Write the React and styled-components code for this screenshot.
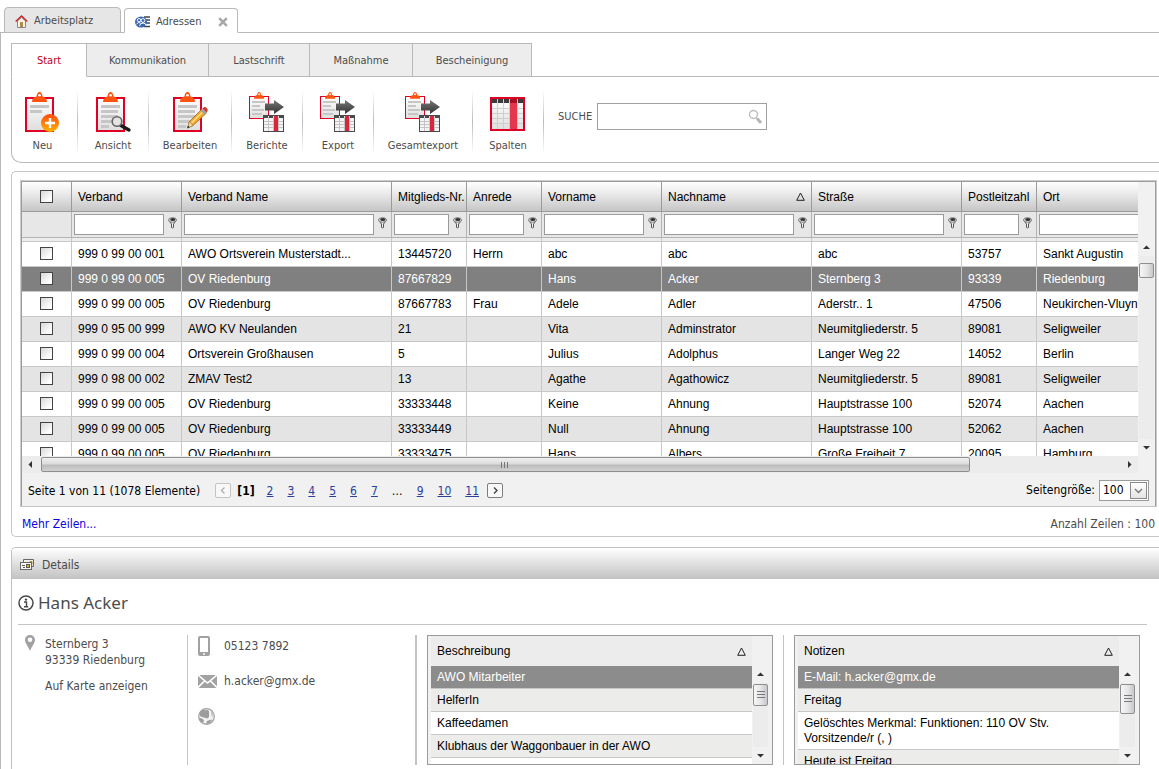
import React from "react";
import styled, { createGlobalStyle, css } from "styled-components";

const UI = `"DejaVu Sans Condensed", "Noto Sans", sans-serif`;
const GRID = `"Liberation Sans", Arial, sans-serif`;
const LINE = "#b9b9b9";

const Global = createGlobalStyle`
  *, *::before, *::after { box-sizing: border-box; }
  body { margin: 0; background: #fff; color: #4c4c4c; font: 12px/16px ${UI}; }
  button, input, select { font: inherit; color: inherit; margin: 0; }
  a { text-decoration: none; color: inherit; }
  svg { display: block; flex: none; }
`;

/* ---------- window tabs ---------- */

const Page = styled.div`
  min-height: 100vh;
  display: flex;
  flex-direction: column;
`;

const WindowTabs = styled.nav`
  display: flex;
  align-items: flex-end;
  height: 33px;
  padding-left: 4px;
  gap: 3px;
  box-shadow: inset 0 -1px ${LINE};
`;

const WindowTab = styled.div`
  display: flex;
  align-items: center;
  height: ${(p) => (p.$active ? 25 : 26)}px;
  width: ${(p) => (p.$active ? 114 : 117)}px;
  padding: 2px 0 0 10px;
  border: 1px solid ${LINE};
  border-radius: 4px 4px 0 0;
  border-bottom-color: ${(p) => (p.$active ? "#fff" : LINE)};
  background: ${(p) => (p.$active ? "#fff" : "#e6e6e6")};
`;

const TabButton = styled.button`
  display: flex;
  align-items: center;
  gap: 6px;
  flex: 1;
  padding: 0;
  border: 0;
  background: none;
  font-size: 11px;
  white-space: nowrap;
`;

const CloseButton = styled.button`
  display: flex;
  padding: 1px 9px 0 0;
  border: 0;
  background: none;
`;

const Workspace = styled.main`
  flex: 1;
  display: flex;
  flex-direction: column;
  border-left: 1px solid ${LINE};
  padding: 10px 0 0 10px;
`;

/* ---------- ribbon ---------- */

const Ribbon = styled.section`
  display: flex;
  flex-direction: column;
`;

const RibbonTabs = styled.div`
  display: flex;
  height: 34px;
  box-shadow: inset 0 -1px ${LINE};
`;

const RibbonTab = styled.button`
  width: ${(p) => p.$w}px;
  padding: 2px 0 0;
  border: 1px solid ${LINE};
  border-left-width: ${(p) => (p.$active ? 1 : 0)}px;
  background: #ededed;
  font-size: 11px;
  white-space: nowrap;
  ${(p) =>
    p.$active &&
    css`
      background: #fff;
      color: #c4001a;
      border-bottom-color: #fff;
    `}
`;

const RibbonBody = styled.div`
  display: flex;
  height: 86px;
  padding-top: 14px;
  border: solid ${LINE};
  border-width: 0 0 1px 1px;
  border-bottom-left-radius: 10px;
`;

const RibbonItem = styled.button`
  display: flex;
  flex-direction: column;
  align-items: center;
  width: ${(p) => p.$w}px;
  height: 62px;
  padding: 0 ${(p) => (p.$first ? 4 : 0)}px 0 0;
  border: 0;
  border-right: 1px solid;
  border-image: linear-gradient(#fff, #bbb 50%, #fff) 1;
  background: none;
  font-size: 11px;
  gap: 5px;
  white-space: nowrap;
`;

const SearchForm = styled.form`
  display: flex;
  align-items: center;
  gap: 5px;
  height: 50px;
  padding-left: 14px;
`;

const SearchLabel = styled.label`
  padding-top: 2px;
  font-size: 11px;
`;

const SearchBox = styled.div`
  display: flex;
  align-items: center;
  width: 170px;
  height: 27px;
  padding-right: 4px;
  border: 1px solid #a0a0a0;
`;

const SearchInput = styled.input`
  flex: 1;
  min-width: 0;
  height: 100%;
  border: 0;
  outline: 0;
  padding: 0 6px;
  background: none;
`;

/* ---------- grid ---------- */

const GridPanel = styled.section`
  margin-top: 8px;
  padding: 8px 2px 4px 8px;
  border: solid #c6c6c6;
  border-width: 1px 0 1px 1px;
  border-radius: 5px 0 0 5px;
`;

const GridFrame = styled.div`
  border: 1px solid #ccc;
  border-bottom-color: #c4c4c4;
  background: #f1f1f1;
`;

const GridInner = styled.div`
  border: solid #9b9b9b;
  border-width: 1px 1px 0;
`;

const GridView = styled.div`
  display: flex;
  height: 274px;
`;

const GridScroll = styled.div`
  flex: 1;
  min-width: 0;
  overflow: hidden;
`;

const Table = styled.table`
  table-layout: fixed;
  width: 1180px;
  border-collapse: separate;
  border-spacing: 0;
  color: #000;
  font: 12px/16px ${GRID};
`;

const HeadCell = styled.th`
  height: 30px;
  padding: 0 0 0 6px;
  border: solid #9b9b9b;
  border-width: 0 1px 1px 0;
  background: linear-gradient(#fff, #f0f0f0 30%, #c6c6c6);
  font-weight: normal;
  text-align: left;
  white-space: nowrap;
  overflow: hidden;
`;

const HeadContent = styled.div`
  display: flex;
  align-items: center;
  justify-content: space-between;
  padding-right: 6px;
`;

const FilterCell = styled.td`
  height: 26px;
  padding: 2px 3px 2px 2px;
  border: solid #b4b4b4;
  border-width: 0 1px 1px 0;
  background: #e7e7e7;
`;

const FilterContent = styled.div`
  display: flex;
  align-items: center;
  gap: 4px;
`;

const FilterInput = styled.input`
  flex: 1;
  min-width: 0;
  height: 21px;
  padding: 0 4px;
  border: 1px solid #9b9b9b;
  background: #fff;
`;

const IconButton = styled.button`
  display: flex;
  padding: 0;
  border: 0;
  background: none;
`;

const FilterButton = styled(IconButton)`
  padding-bottom: 3px;
`;

const SpacerCell = styled.td`
  height: 4px;
  padding: 0;
  border: solid #c8c8c8;
  border-width: 0 1px 1px 0;
  background: #ececec;
`;

const Row = styled.tr`
  background: ${(p) => (p.$selected ? "#808080" : p.$alt ? "#e4e4e4" : "#fff")};
  color: ${(p) => (p.$selected ? "#fff" : "#000")};
`;

const Cell = styled.td`
  height: 25px;
  padding: 0 0 0 6px;
  border: solid #c8c8c8;
  border-width: 0 1px 1px 0;
  white-space: nowrap;
  overflow: hidden;
`;

const Check = styled.input.attrs({ type: "checkbox" })`
  appearance: none;
  display: block;
  width: 13px;
  height: 13px;
  margin: 0 auto;
  border: 1px solid #444;
  background: linear-gradient(135deg, #d8d8d8, #fff 80%);
`;

const CheckWrap = styled.div`
  padding: 0 6px ${(p) => (p.$inRow ? 2 : 0)}px 0;
`;

const VBar = styled.div`
  display: flex;
  flex-direction: column;
  align-items: center;
  width: 17px;
  padding: ${(p) => p.$top}px 1px 0;
  background: #f1f1f1;
`;

const ArrowButton = styled.button`
  display: flex;
  align-items: center;
  justify-content: center;
  width: 17px;
  height: 17px;
  padding: 0;
  border: 0;
  background: none;
`;

const VTrack = styled.div`
  flex: 1;
  width: 15px;
  background: #ececec;
`;

const VThumb = styled.div`
  display: flex;
  align-items: center;
  justify-content: center;
  height: ${(p) => p.$h}px;
  margin-top: ${(p) => p.$offset || 0}px;
  border: 1px solid #8f8f8f;
  border-radius: 2px;
  background: linear-gradient(90deg, #f6f6f6, #e6e6e8 50%, #c8c8cc);
`;

const HBar = styled.div`
  display: flex;
  align-items: center;
  height: 17px;
  margin-right: 17px;
  background: #ececec;
`;

const HTrack = styled.div`
  flex: 1;
  padding-left: 2px;
`;

const HThumb = styled.div`
  display: flex;
  align-items: center;
  justify-content: center;
  width: 86%;
  height: 15px;
  border: 1px solid #8f8f8f;
  border-radius: 2px;
  background: linear-gradient(#f0f0f0, #dcdcdc 45%, #bcbcbc 55%, #d0d0d0);
`;

const Pager = styled.div`
  display: flex;
  align-items: center;
  justify-content: space-between;
  height: 33px;
  padding: 1px 6px 0 6px;
  color: #000;
`;

const PageLinks = styled.div`
  display: flex;
  align-items: center;
  gap: 14px;
  padding-top: 1px;
`;

const PageSummary = styled.span`
  margin-right: 7px;
`;

const CurrentPage = styled.b`
  margin: 0 -2px;
`;

const PageLink = styled.a`
  color: #2b3f9b;
  text-decoration: underline;
`;

const StepButton = styled.button`
  display: flex;
  align-items: center;
  justify-content: center;
  width: 16px;
  height: 15px;
  margin: 0 -6px;
  padding: 0;
  border: 1px solid ${(p) => (p.disabled ? "#c4c4c4" : "#7d7d7d")};
  border-radius: 2px;
  background: #f8f8f8;
`;

const SizeField = styled.div`
  display: flex;
  align-items: center;
  gap: 4px;
`;

const SelectWrap = styled.div`
  position: relative;
`;

const SizeSelect = styled.select`
  appearance: none;
  display: block;
  width: 50px;
  height: 21px;
  padding: 0 0 1px 3px;
  border: 1px solid #9b9b9b;
  border-radius: 0;
  background: #fff;
`;

const SelectArrow = styled.span`
  position: absolute;
  top: 2px;
  right: 2px;
  display: flex;
  align-items: center;
  justify-content: center;
  width: 17px;
  height: 17px;
  border: 1px solid #8a8a8a;
  background: linear-gradient(#fff, #e4e4e4);
  pointer-events: none;
`;

const GridFooter = styled.div`
  display: flex;
  justify-content: space-between;
  align-items: center;
  height: 25px;
  padding: 8px 2px 0 2px;
`;

const MoreLink = styled.a`
  color: #0a00e6;
`;

/* ---------- details ---------- */

const Details = styled.section`
  flex: 1;
  margin-top: 10px;
  border: solid #c0c0c0;
  border-width: 1px 0 0 1px;
  border-top-left-radius: 5px;
  overflow: hidden;
`;

const DetailsHead = styled.h2`
  display: flex;
  align-items: center;
  gap: 8px;
  height: 31px;
  margin: 0;
  padding: 2px 0 0 8px;
  background: linear-gradient(#fff, #e6e6e6 40%, #c2c2c2);
  font-weight: normal;
  font-size: 12px;
`;

const DetailsBody = styled.div`
  padding: 0 12px 4px 6px;
`;

const PersonName = styled.h3`
  display: flex;
  align-items: center;
  gap: 4px;
  height: 46px;
  margin: 0;
  padding-top: 2px;
  border-bottom: 1px solid #c4c4c4;
  font: 17px/24px "Noto Sans", sans-serif;
`;

const DetailColumns = styled.div`
  display: flex;
  height: 140px;
  padding: 10px 7px 0 0;
`;

const AddressColumn = styled.address`
  display: flex;
  gap: 10px;
  width: 170px;
  padding-left: 7px;
  border-right: 1px solid #c4c4c4;
  font-style: normal;
`;

const AddressText = styled.div`
  display: flex;
  flex-direction: column;
  padding-top: 1px;
`;

const MapLink = styled.a`
  margin-top: 10px;
`;

const ContactColumn = styled.div`
  display: flex;
  flex-direction: column;
  gap: 13px;
  width: 229px;
  padding-left: 10px;
  border-right: 2px solid #c4c4c4;
`;

const ContactRow = styled.div`
  display: flex;
  align-items: center;
  gap: 7px;
  height: 22px;
`;

const ContactIcon = styled.span`
  width: 19px;
`;

const ListColumn = styled.div`
  flex: 1;
  min-width: 0;
  display: flex;
  padding: 0 10px;
  &:last-child {
    padding-right: 0;
    border-left: 1px solid #c4c4c4;
  }
`;

const ListBox = styled.div`
  flex: 1;
  min-width: 0;
  display: flex;
  padding: 0 3px 0 3px;
  border: 1px solid #9b9b9b;
  background: #f1f1f1;
`;

const ListScroll = styled.div`
  flex: 1;
  min-width: 0;
  overflow: hidden;
  background: #fff;
`;

const ListTable = styled.table`
  width: 100%;
  border-collapse: separate;
  border-spacing: 0;
  color: #000;
  font: 12px/15px ${GRID};
`;

const ListHead = styled.th`
  height: 30px;
  padding: 0 0 0 6px;
  background: #ececec;
  font-weight: normal;
  text-align: left;
`;

const ListRow = styled.tr`
  background: ${(p) => (p.$selected ? "#8c8c8c" : p.$alt ? "#ececea" : "#fff")};
  color: ${(p) => (p.$selected ? "#fff" : "#000")};
`;

const ListCell = styled.td`
  height: 23px;
  padding: 4px 40px 3px 6px;
  border-bottom: 1px solid #c8c8c8;
`;

/* ---------- drawings ---------- */

const Clip = ({ x, y, s = 1 }) => (
  <g transform={`translate(${x} ${y}) scale(${s})`}>
    <path d="M0 10C0 6.500 2 5 4.500 4.500C4.800 1.500 5.800 0 7.500 0S10.200 1.500 10.500 4.500C13 5 15 6.500 15 10Z" fill="#ff5410" />
    <circle cx="7.500" cy="3.300" r="1.300" fill="#fff" />
  </g>
);

const ClipboardBase = ({ short }) => (
  <>
    <rect x="5" y="7" width="27" height="33" fill="url(#paper)" stroke="#df0024" strokeWidth="2" />
    <g fill="#c6c6c6">
      <rect x="9" y="14" width="19" height="3" />
      <rect x="9" y="19" width={short ? 12 : 17} height="3" />
      {!short && <rect x="9" y="24" width="17" height="3" />}
      {!short && <rect x="9" y="29" width="13" height="3" />}
      {!short && <rect x="9" y="34" width="8" height="3" />}
    </g>
    <Clip x={11} y={1} />
  </>
);

const IconNeu = () => (
  <svg width="37" height="42" viewBox="3 0 37 42">
    <ClipboardBase short />
    <circle cx="29" cy="32" r="9" fill="url(#orange)" />
    <path d="M29 27v10M24 32h10" stroke="#fff" strokeWidth="2.400" />
  </svg>
);

const IconAnsicht = () => (
  <svg width="37" height="42" viewBox="3 0 37 42">
    <ClipboardBase />
    <path d="M29 34.500l8 4.500" stroke="#1a1a1a" strokeWidth="3.400" strokeLinecap="round" />
    <circle cx="25" cy="30.500" r="4.800" fill="#e4e4e4" stroke="#666" strokeWidth="1.600" />
  </svg>
);

const IconBearbeiten = () => (
  <svg width="37" height="42" viewBox="3 0 37 42">
    <ClipboardBase />
    <path d="M18.500 37l2-6.500L33 18l4.500 4L24 34.500Z" fill="#f4a72c" stroke="#8d5d18" strokeWidth=".7" />
    <path d="M22.500 32L34.500 20" stroke="#ffdf82" strokeWidth="1.500" />
    <path d="M18.500 37l2-6.500l3.500 4Z" fill="#f3d9ac" stroke="#8d5d18" strokeWidth=".5" />
    <path d="M18.300 37.300l.8-2.600l1.600 1.500Z" fill="#222" />
    <path d="M31.500 19.500l2-2l4 4l-2 1.900Z" fill="#9aa0a6" />
    <path d="M33.500 17.500l1.300-1.200q1.600-.6 3 .8t.8 3l-1.100 1.400Z" fill="#d3372c" />
  </svg>
);

const IconExport = () => (
  <svg width="37" height="42" viewBox="1 0 37 42">
    <rect x="1.500" y="5.500" width="19" height="22" fill="url(#paper)" stroke="#df0024" />
    <g fill="#c6c6c6">
      <rect x="4" y="10" width="13" height="2" />
      <rect x="4" y="14" width="8" height="2" />
      <rect x="4" y="18" width="12" height="2" />
      <rect x="4" y="22" width="10" height="2" />
    </g>
    <Clip x={6} y={1} s={0.68} />
    <path d="M17 12.500h9v-3.500l10 7l-10 7v-3.500h-9Z" fill="url(#arrow)" />
    <rect x="15" y="24" width="21" height="17" fill="#4a4a4a" />
    <rect x="16" y="27" width="19" height="13" fill="#f4f4f4" />
    <path d="M20.500 27v13M25.500 27v13M30.500 27v13M16 30.500h19M16 33.500h19M16 36.500h19" stroke="#c4c4c4" />
    <path d="M20.500 25v2M25.500 25v2M30.500 25v2" stroke="#ddd" />
    <rect x="26" y="25" width="4" height="15" fill="#d8263a" />
  </svg>
);

const IconSpalten = () => (
  <svg width="37" height="42" viewBox="1 0 37 42">
    <rect x="2" y="7" width="33" height="32" fill="url(#paper)" stroke="#df0024" strokeWidth="2" />
    <rect x="3" y="8" width="31" height="4" fill="#3c3c3c" />
    <path d="M3 17.500h31M3 22.500h31M3 27.500h31M3 32.500h31" stroke="#cfcfcf" />
    <path d="M8.500 8v30M14.500 8v30M20.500 8v30M28.500 8v30" stroke="#cfcfcf" />
    <rect x="21" y="8" width="7" height="30" fill="#e2374d" />
    <rect x="21" y="8" width="7" height="4" fill="#a80f22" />
  </svg>
);

const HiddenDefs = styled.svg`
  position: absolute;
`;

const Defs = () => (
  <HiddenDefs width="0" height="0" aria-hidden="true">
    <defs>
      <linearGradient id="paper" x1="0" y1="0" x2="0" y2="1">
        <stop offset="0" stopColor="#fff" />
        <stop offset="1" stopColor="#dedede" />
      </linearGradient>
      <linearGradient id="orange" x1="0" y1="0" x2="0" y2="1">
        <stop offset="0" stopColor="#ff4a10" />
        <stop offset="1" stopColor="#ffb400" />
      </linearGradient>
      <linearGradient id="arrow" x1="0" y1="0" x2="0" y2="1">
        <stop offset="0" stopColor="#777" />
        <stop offset="1" stopColor="#333" />
      </linearGradient>
    </defs>
  </HiddenDefs>
);

const IconHome = () => (
  <svg width="13" height="13" viewBox="0 0 13 13">
    <path d="M2.500 6v6.500h8V6L6.500 2.500Z" fill="#f7f3e6" stroke="#888" />
    <rect x="5" y="7" width="3" height="5" fill="#b08d45" />
    <path d="M.7 6.500L6.500 1l5.800 5.500" fill="none" stroke="#c9252b" strokeWidth="1.400" />
  </svg>
);

const IconContacts = () => (
  <svg width="15" height="12" viewBox="0 0 15 12">
    <path d="M9 1h6M11 4h4M11 7h4M9 10.500h6" stroke="#444" strokeWidth="1.300" />
    <ellipse cx="6" cy="6" rx="6" ry="5.500" fill="#3a67b0" />
    <circle cx="4" cy="4.200" r="1.700" fill="#3a67b0" stroke="#fff" />
    <circle cx="8" cy="4.500" r="1.900" fill="#3a67b0" stroke="#fff" />
    <path d="M1.500 8q2-2.500 4-1M4.500 10q.5-3 3.500-3t3 2.500" fill="none" stroke="#fff" />
  </svg>
);

const IconClose = () => (
  <svg width="10" height="10" viewBox="0 0 10 10">
    <path d="M1.200 1.200l7.600 7.600M8.800 1.200L1.200 8.800" stroke="#a8a8a8" strokeWidth="2.600" />
  </svg>
);

const IconSearch = () => (
  <svg width="14" height="15" viewBox="0 0 14 15">
    <circle cx="5.500" cy="5.500" r="4" fill="none" stroke="#bdbdbd" strokeWidth="1.500" />
    <path d="M8.500 9l1 1" stroke="#bdbdbd" strokeWidth="1.500" />
    <path d="M9.800 10.300l2.400 2.700" stroke="#b4b4b4" strokeWidth="3" strokeLinecap="round" />
  </svg>
);

const IconFilter = () => (
  <svg width="10" height="12" viewBox="0 0 10 12">
    <path d="M.8 3.500L3.500 7v3.500q1 .8 2 0V7L8.300 3.500" fill="#f4f4f4" stroke="#555" />
    <ellipse cx="4.500" cy="3" rx="4" ry="2.300" fill="#e4e4e4" stroke="#777" />
    <ellipse cx="4.800" cy="2.500" rx="2.600" ry="1.600" fill="#333" />
  </svg>
);

const IconSort = () => (
  <svg width="9" height="9" viewBox="0 0 9 9">
    <path d="M4.500 1L8.300 8.300H.7Z" fill="none" stroke="#222" />
  </svg>
);

const Arrow = ({ d }) => (
  <svg width="7" height="7" viewBox="0 0 7 7">
    <path d={d} fill="#333" />
  </svg>
);
const UP = "M0 5L3.500 1.500L7 5Z";
const DOWN = "M0 2L3.500 5.500L7 2Z";
const LEFT = "M5 0L1.500 3.500L5 7Z";
const RIGHT = "M2 0L5.500 3.500L2 7Z";

const Chevron = ({ d, color }) => (
  <svg width="9" height="9" viewBox="0 0 9 9">
    <path d={d} fill="none" stroke={color} strokeWidth="1.400" />
  </svg>
);

const Grip = ({ vertical }) => (
  <svg width="8" height="8" viewBox="0 0 8 8">
    {vertical ? (
      <path d="M0 .5h8M0 3.500h8M0 6.500h8" stroke="#777" />
    ) : (
      <path d="M.5 1v6M3.500 1v6M6.500 1v6" stroke="#777" />
    )}
  </svg>
);

const IconCards = () => (
  <svg width="14" height="12" viewBox="0 0 14 12">
    <path d="M3.500 3V.5h10v7h-2" fill="#eee" stroke="#666" />
    <path d="M9.500 2.500h2.500v3" fill="none" stroke="#b89130" />
    <rect x=".5" y="3.500" width="11" height="7" fill="#f6f6f6" stroke="#666" />
    <path d="M2 6.500h3M3 8.500h2" stroke="#555" />
    <rect x="6" y="5" width="4" height="4" fill="#555" />
    <rect x="7" y="6" width="2" height="2" fill="#e0ac2e" />
  </svg>
);

const IconInfo = () => (
  <svg width="16" height="16" viewBox="0 0 16 16">
    <circle cx="8" cy="8" r="7" fill="none" stroke="#484848" strokeWidth="1.500" />
    <circle cx="8" cy="4.600" r="1.200" fill="#484848" />
    <path d="M6 7h2.500v4.500M6 11.700h4.200" fill="none" stroke="#484848" strokeWidth="1.400" />
  </svg>
);

const IconPin = () => (
  <svg width="10" height="16" viewBox="0 0 10 16">
    <path d="M5 0C2 0 0 2.200 0 5c0 3.200 3 6 5 11c2-5 5-7.800 5-11C10 2.200 8 0 5 0Z" fill="#a2a2a2" />
    <circle cx="5" cy="4.800" r="2.300" fill="#fff" />
  </svg>
);

const IconPhone = () => (
  <svg width="12" height="20" viewBox="0 0 12 20">
    <rect width="12" height="20" rx="2" fill="#a2a2a2" />
    <rect x="2" y="2" width="8" height="14" fill="#fff" />
    <circle cx="6" cy="18" r="1" fill="#fff" />
  </svg>
);

const IconMail = () => (
  <svg width="19" height="13" viewBox="0 0 19 13">
    <rect width="19" height="13" fill="#a2a2a2" />
    <path d="M0 0l9.500 8L19 0M0 12.500l6.500-6.500M19 12.500L12.500 6" fill="none" stroke="#fff" strokeWidth="1.600" />
  </svg>
);

const IconGlobe = () => (
  <svg width="17" height="17" viewBox="0 0 17 17">
    <circle cx="8.500" cy="8.500" r="7.800" fill="#f2f2f2" stroke="#a2a2a2" strokeWidth="1.200" />
    <path d="M1.500 6q1-3.500 4.500-5l1 1.500l1.500-1l2.500 1.500v6l-1.500 1.500L6 9.500L2.500 8.500Z" fill="#9c9c9c" />
    <path d="M1 9.500l4 1.500l1 2l-1 1.500Q1.500 13 1 9.500ZM9 13l4.500-1.500q1 1-1 2.500q-2 1.800-4.500 2Z" fill="#9c9c9c" />
    <path d="M13 3l2.500 3l.5 4l-1.500-1l-1.500-2Z" fill="#c9c9c9" />
  </svg>
);

/* ---------- data ---------- */

const RIBBON_TABS = [
  ["Start", 76],
  ["Kommunikation", 122],
  ["Lastschrift", 101],
  ["Maßnahme", 103],
  ["Bescheinigung", 119],
];

const RIBBON_ITEMS = [
  ["Neu", 66, IconNeu],
  ["Ansicht", 71, IconAnsicht],
  ["Bearbeiten", 83, IconBearbeiten],
  ["Berichte", 71, IconExport],
  ["Export", 71, IconExport],
  ["Gesamtexport", 99, IconExport],
  ["Spalten", 71, IconSpalten],
];

const COLUMNS = [
  ["Verband", 110],
  ["Verband Name", 210],
  ["Mitglieds-Nr.", 75],
  ["Anrede", 75],
  ["Vorname", 120],
  ["Nachname", 150],
  ["Straße", 150],
  ["Postleitzahl", 75],
  ["Ort", 165],
];

const ROWS = [
  ["999 0 99 00 001", "AWO Ortsverein Musterstadt...", "13445720", "Herrn", "abc", "abc", "abc", "53757", "Sankt Augustin"],
  ["999 0 99 00 005", "OV Riedenburg", "87667829", "", "Hans", "Acker", "Sternberg 3", "93339", "Riedenburg"],
  ["999 0 99 00 005", "OV Riedenburg", "87667783", "Frau", "Adele", "Adler", "Aderstr.. 1", "47506", "Neukirchen-Vluyn"],
  ["999 0 95 00 999", "AWO KV Neulanden", "21", "", "Vita", "Adminstrator", "Neumitgliederstr. 5", "89081", "Seligweiler"],
  ["999 0 99 00 004", "Ortsverein Großhausen", "5", "", "Julius", "Adolphus", "Langer Weg 22", "14052", "Berlin"],
  ["999 0 98 00 002", "ZMAV Test2", "13", "", "Agathe", "Agathowicz", "Neumitgliederstr. 5", "89081", "Seligweiler"],
  ["999 0 99 00 005", "OV Riedenburg", "33333448", "", "Keine", "Ahnung", "Hauptstrasse 100", "52074", "Aachen"],
  ["999 0 99 00 005", "OV Riedenburg", "33333449", "", "Null", "Ahnung", "Hauptstrasse 100", "52062", "Aachen"],
  ["999 0 99 00 005", "OV Riedenburg", "33333475", "", "Hans", "Albers", "Große Freiheit 7", "20095", "Hamburg"],
];

const LISTS = [
  {
    title: "Beschreibung",
    thumb: 22,
    rows: ["AWO Mitarbeiter", "HelferIn", "Kaffeedamen", "Klubhaus der Waggonbauer in der AWO"],
  },
  {
    title: "Notizen",
    thumb: 30,
    rows: ["E-Mail: h.acker@gmx.de", "Freitag", "Gelöschtes Merkmal: Funktionen: 110 OV Stv. Vorsitzende/r (, )", "Heute ist Freitag"],
  },
];

/* ---------- sections ---------- */

const VerticalBar = ({ top, thumb, offset, grip }) => (
  <VBar $top={top}>
    <ArrowButton type="button" aria-label="Nach oben"><Arrow d={UP} /></ArrowButton>
    <VTrack>
      <VThumb $h={thumb} $offset={offset}>{grip && <Grip vertical />}</VThumb>
    </VTrack>
    <ArrowButton type="button" aria-label="Nach unten"><Arrow d={DOWN} /></ArrowButton>
  </VBar>
);

const AddressTable = () => (
  <Table>
    <colgroup>
      <col width="50" />
      {COLUMNS.map(([name, w]) => <col key={name} width={w} />)}
    </colgroup>
    <thead>
      <tr>
        <HeadCell><CheckWrap><Check aria-label="Alle auswählen" /></CheckWrap></HeadCell>
        {COLUMNS.map(([name]) => (
          <HeadCell key={name} scope="col">
            <HeadContent>
              {name}
              {name === "Nachname" && <IconSort />}
            </HeadContent>
          </HeadCell>
        ))}
      </tr>
      <tr>
        <FilterCell />
        {COLUMNS.map(([name]) => (
          <FilterCell key={name}>
            <FilterContent>
              <FilterInput type="text" aria-label={name + " filtern"} />
              <FilterButton type="button" aria-label={"Filter " + name}><IconFilter /></FilterButton>
            </FilterContent>
          </FilterCell>
        ))}
      </tr>
      <tr>
        <SpacerCell />
        {COLUMNS.map(([name]) => <SpacerCell key={name} />)}
      </tr>
    </thead>
    <tbody>
      {ROWS.map((row, i) => (
        <Row key={i} $selected={i === 1} $alt={i % 2 === 1}>
          <Cell><CheckWrap $inRow><Check aria-label={row[5] + " auswählen"} /></CheckWrap></Cell>
          {row.map((value, j) => <Cell key={j}>{value}</Cell>)}
        </Row>
      ))}
    </tbody>
  </Table>
);

const PagerBar = () => (
  <Pager>
    <PageLinks>
      <PageSummary>Seite 1 von 11 (1078 Elemente)</PageSummary>
      <StepButton type="button" disabled aria-label="Vorherige Seite">
        <Chevron d="M5.500 1.500L2.500 4.500l3 3" color="#b0b0b0" />
      </StepButton>
      <CurrentPage>[1]</CurrentPage>
      {["2", "3", "4", "5", "6", "7"].map((n) => <PageLink key={n} href={"#" + n}>{n}</PageLink>)}
      <span>…</span>
      {["9", "10", "11"].map((n) => <PageLink key={n} href={"#" + n}>{n}</PageLink>)}
      <StepButton type="button" aria-label="Nächste Seite">
        <Chevron d="M3 1.500l3 3l-3 3" color="#444" />
      </StepButton>
    </PageLinks>
    <SizeField>
      <label htmlFor="page-size">Seitengröße:</label>
      <SelectWrap>
        <SizeSelect id="page-size" defaultValue="100">
          <option>100</option>
        </SizeSelect>
        <SelectArrow><Chevron d="M1 3l3.500 3.500L8 3" color="#777" /></SelectArrow>
      </SelectWrap>
    </SizeField>
  </Pager>
);

const ListPanel = ({ title, rows, thumb }) => (
  <ListColumn>
    <ListBox>
      <ListScroll>
        <ListTable>
          <thead>
            <tr>
              <ListHead scope="col"><HeadContent>{title}<IconSort /></HeadContent></ListHead>
            </tr>
          </thead>
          <tbody>
            {rows.map((text, i) => (
              <ListRow key={text} $selected={i === 0} $alt={i % 2 === 1}>
                <ListCell>{text}</ListCell>
              </ListRow>
            ))}
          </tbody>
        </ListTable>
      </ListScroll>
      <VerticalBar top={30} thumb={thumb} offset={1} grip />
    </ListBox>
  </ListColumn>
);

export default function App() {
  return (
    <Page>
      <Global />
      <Defs />
      <WindowTabs>
        <WindowTab>
          <TabButton type="button"><IconHome />Arbeitsplatz</TabButton>
        </WindowTab>
        <WindowTab $active>
          <TabButton type="button"><IconContacts />Adressen</TabButton>
          <CloseButton type="button" aria-label="Tab schließen"><IconClose /></CloseButton>
        </WindowTab>
      </WindowTabs>
      <Workspace>
        <Ribbon>
          <RibbonTabs>
            {RIBBON_TABS.map(([name, w], i) => (
              <RibbonTab key={name} type="button" $w={w} $active={i === 0}>{name}</RibbonTab>
            ))}
          </RibbonTabs>
          <RibbonBody>
            {RIBBON_ITEMS.map(([name, w, Icon], i) => (
              <RibbonItem key={name} type="button" $w={w} $first={i === 0}><Icon />{name}</RibbonItem>
            ))}
            <SearchForm>
              <SearchLabel htmlFor="search">SUCHE</SearchLabel>
              <SearchBox>
                <SearchInput id="search" type="text" />
                <IconButton type="button" aria-label="Suchen"><IconSearch /></IconButton>
              </SearchBox>
            </SearchForm>
          </RibbonBody>
        </Ribbon>

        <GridPanel>
          <GridFrame>
            <GridInner>
              <GridView>
                <GridScroll><AddressTable /></GridScroll>
                <VerticalBar top={57} thumb={15} offset={7} />
              </GridView>
              <HBar>
                <ArrowButton type="button" aria-label="Nach links"><Arrow d={LEFT} /></ArrowButton>
                <HTrack><HThumb><Grip /></HThumb></HTrack>
                <ArrowButton type="button" aria-label="Nach rechts"><Arrow d={RIGHT} /></ArrowButton>
              </HBar>
              <PagerBar />
            </GridInner>
          </GridFrame>
          <GridFooter>
            <MoreLink href="#more">Mehr Zeilen...</MoreLink>
            <span>Anzahl Zeilen : 100</span>
          </GridFooter>
        </GridPanel>

        <Details>
          <DetailsHead><IconCards />Details</DetailsHead>
          <DetailsBody>
            <PersonName><IconInfo />Hans Acker</PersonName>
            <DetailColumns>
              <AddressColumn>
                <IconPin />
                <AddressText>
                  <span>Sternberg 3</span>
                  <span>93339 Riedenburg</span>
                  <MapLink href="#map">Auf Karte anzeigen</MapLink>
                </AddressText>
              </AddressColumn>
              <ContactColumn>
                <ContactRow><ContactIcon><IconPhone /></ContactIcon>05123 7892</ContactRow>
                <ContactRow><ContactIcon><IconMail /></ContactIcon>h.acker@gmx.de</ContactRow>
                <ContactRow><ContactIcon><IconGlobe /></ContactIcon></ContactRow>
              </ContactColumn>
              {LISTS.map((list) => <ListPanel key={list.title} {...list} />)}
            </DetailColumns>
          </DetailsBody>
        </Details>
      </Workspace>
    </Page>
  );
}
